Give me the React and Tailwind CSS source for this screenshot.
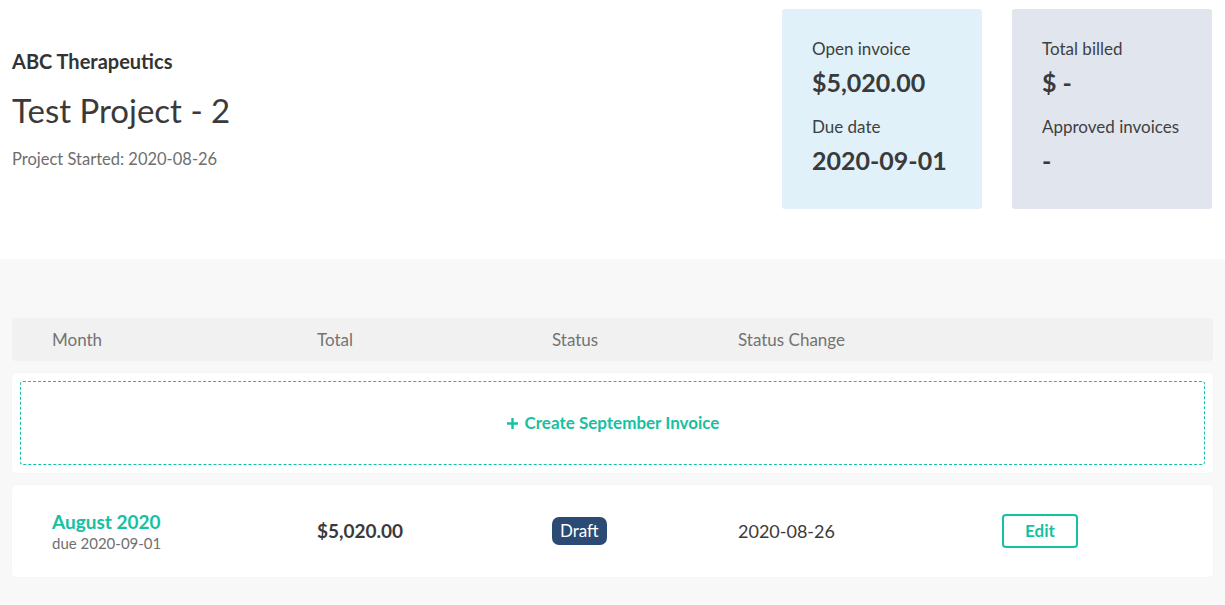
import React from "react";

const teal = "text-[#14c1a3]";

function StatCard({ className, rows }) {
  return (
    <div className={`w-[200px] h-[200px] rounded-[3px] pl-[30px] pt-[29px] ${className}`}>
      {rows.map((r) => (
        <div key={r.label} className="mb-[18px]">
          <div className="text-[17px] leading-[22px] text-[#3f3f3f]">{r.label}</div>
          <div className="text-[25px] leading-[32px] font-bold text-[#3a3a3a] mt-[6px]">
            {r.value}
          </div>
        </div>
      ))}
    </div>
  );
}

export default function App() {
  return (
    <div
      className="min-h-screen bg-[#f8f8f8] text-[#3f3f3f]"
      style={{ fontFamily: "Lato, 'Open Sans', sans-serif" }}
    >
      {/* Header */}
      <div className="bg-white h-[259px] flex justify-between pl-[12px] pr-[13px] pt-[9px]">
        <div className="pt-[39px]">
          <div className="text-[20px] leading-[26px] font-bold text-[#333]">ABC Therapeutics</div>
          <h1 className="text-[33px] leading-[44px] text-[#3a3a3a] mt-[14px]">
            Test Project - 2
          </h1>
          <div className="text-[16.5px] leading-[22px] text-[#6e6e6e] mt-[16px]">
            Project Started: 2020-08-26
          </div>
        </div>
        <div className="flex gap-[30px]">
          <StatCard
            className="bg-[#e0f1fa]"
            rows={[
              { label: "Open invoice", value: "$5,020.00" },
              { label: "Due date", value: "2020-09-01" },
            ]}
          />
          <StatCard
            className="bg-[#e1e6ee]"
            rows={[
              { label: "Total billed", value: "$ -" },
              { label: "Approved invoices", value: "-" },
            ]}
          />
        </div>
      </div>

      {/* Invoices */}
      <div className="px-[12px] pt-[59px] pb-[28px]">
        <div className="flex items-center h-[43px] bg-[#f1f1f1] rounded-[4px] text-[17px] text-[#737373]">
          <div className="w-[305px] pl-[40px]">Month</div>
          <div className="w-[235px]">Total</div>
          <div className="w-[186px]">Status</div>
          <div>Status Change</div>
        </div>

        <div className="mt-[12px] bg-white rounded-[4px] p-[8px] shadow-[0_0_2px_rgba(0,0,0,0.06)]">
          <button
            className={`w-full h-[84px] border border-dashed border-[#14c1a3] rounded-[3px] flex items-center justify-center gap-[6px] text-[17px] font-bold ${teal}`}
          >
            <svg width="13" height="13" viewBox="0 0 13 13">
              <path d="M6.5 1v11M1 6.5h11" stroke="#14c1a3" strokeWidth="2.4" />
            </svg>
            Create September Invoice
          </button>
        </div>

        <div className="mt-[12px] bg-white rounded-[4px] h-[92px] flex items-center shadow-[0_0_2px_rgba(0,0,0,0.06)]">
          <div className="w-[305px] pl-[40px]">
            <div className={`text-[19px] leading-[24px] font-bold ${teal}`}>August 2020</div>
            <div className="text-[15px] leading-[18px] text-[#707070]">due 2020-09-01</div>
          </div>
          <div className="w-[235px] text-[19px] font-bold text-[#3a3a3a]">$5,020.00</div>
          <div className="w-[186px]">
            <span className="inline-block bg-[#2b4a74] text-white text-[17px] leading-[28px] px-[8px] rounded-[7px]">
              Draft
            </span>
          </div>
          <div className="w-[264px] text-[18px] text-[#3a3a3a]">2020-08-26</div>
          <button
            className={`w-[76px] h-[34px] border-2 border-[#14c1a3] rounded-[4px] text-[17px] font-bold ${teal}`}
          >
            Edit
          </button>
        </div>
      </div>
    </div>
  );
}
